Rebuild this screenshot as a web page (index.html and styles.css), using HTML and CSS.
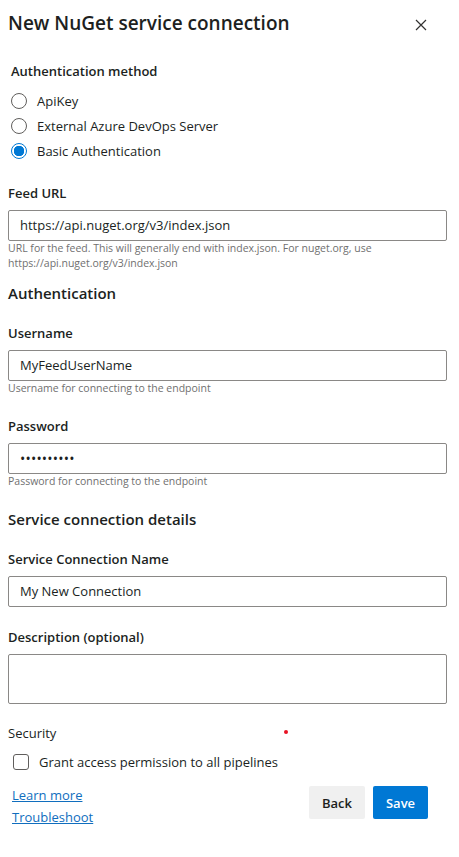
FILE: index.html
```html
<!DOCTYPE html>
<html lang="en">
<head>
  <meta charset="UTF-8" />
  <meta name="viewport" content="width=device-width, initial-scale=1.0" />
  <title>New NuGet service connection</title>
  <link rel="stylesheet" href="styles.css">
</head>
<body>

<div class="panel">
  <div class="panel-header">
    <h1>New NuGet service connection</h1>
    <button class="close" aria-label="Close">
      <svg width="12" height="12" viewBox="0 0 12 12"><path d="M1 1 L11 11 M11 1 L1 11" stroke="#323130" stroke-width="1.2" fill="none"/></svg>
    </button>
  </div>

  <div class="auth-method">
    <div class="field-label">Authentication method</div>
    <div class="radios">
      <label class="radio"><span class="circle"></span>ApiKey</label>
      <label class="radio"><span class="circle"></span>External Azure DevOps Server</label>
      <label class="radio"><span class="circle checked"></span>Basic Authentication</label>
    </div>
  </div>

  <div class="field-label first">Feed URL</div>
  <div class="textbox">https://api.nuget.org/v3/index.json</div>
  <div class="help">URL for the feed. This will generally end with index.json. For nuget.org, use https://api.nuget.org/v3/index.json</div>

  <h2>Authentication</h2>

  <div class="field-label">Username</div>
  <div class="textbox">MyFeedUserName</div>
  <div class="help">Username for connecting to the endpoint</div>

  <div class="field-label">Password</div>
  <div class="textbox dots">••••••••••</div>
  <div class="help">Password for connecting to the endpoint</div>

  <h2 class="spaced">Service connection details</h2>

  <div class="field-label">Service Connection Name</div>
  <div class="textbox">My New Connection</div>

  <div class="field-label">Description (optional)</div>
  <div class="textbox area"></div>

  <div class="security"><span class="security-text">Security</span><span class="req-dot"></span></div>
  <label class="check"><span class="box"></span>Grant access permission to all pipelines</label>

  <div class="footer">
    <div class="links">
      <a href="#">Learn more</a>
      <a href="#">Troubleshoot</a>
    </div>
    <div class="buttons">
      <button class="btn">Back</button>
      <button class="btn primary">Save</button>
    </div>
  </div>
</div>

</body>
</html>
```

FILE: styles.css
```css
body { margin: 0; background: #fff; font-family: "Open Sans", "Noto Sans", Arial, sans-serif; color: #201f1e; font-size: 13px; }
.panel { width: 439px; padding: 8px 0 0 8px; }
.panel-header { display: flex; align-items: center; height: 28px; margin-top: 1px; }
h1 { margin: 0; font-size: 19px; font-weight: 600; line-height: 28px; flex: 1; }
.close { border: 0; background: none; padding: 0; width: 12px; height: 12px; margin: 3px 20px 0 0; display: flex; }
.auth-method { padding-left: 3px; margin-top: 24px; }
.field-label { font-weight: 600; font-size: 13px; line-height: 20px; margin-top: 20px; }
.auth-method .field-label { margin-top: 0; }
.radios { margin-top: 7px; }
.radio { display: flex; align-items: center; height: 25px; }
.circle { width: 16px; height: 16px; box-sizing: border-box; border: 1px solid #605e5c; border-radius: 50%; margin-right: 10px; }
.circle.checked { border-color: #0078d4; background: radial-gradient(circle, #0078d4 0 5px, #fff 5.5px); }
.textbox { box-sizing: border-box; height: 31px; margin-top: 7px; border: 1px solid #8a8886; border-radius: 2px; padding: 0 11px; line-height: 29px; font-size: 13px; }
.textbox.dots { font-size: 14px; letter-spacing: 0.2px; }
.textbox.area { height: 50px; margin-top: 7px; }
.help { font-size: 10.5px; line-height: 15px; color: #707070; padding-right: 40px; }
h2 { margin: 11px 0 0; font-size: 15px; font-weight: 600; line-height: 22px; }
h2.spaced { margin-top: 19px; }
h2 + .field-label { margin-top: 19px; }
.security { display: flex; align-items: center; line-height: 20px; margin-top: 19px; }
.security-text { width: 276px; }
.req-dot { width: 4px; height: 4px; border-radius: 50%; background: #e81123; margin-bottom: 2px; }
.check { display: flex; align-items: center; height: 24px; margin-top: 7px; padding-left: 5px; }
.box { width: 16px; height: 16px; box-sizing: border-box; border: 1px solid #605e5c; border-radius: 3px; margin-right: 10px; }
.footer { display: flex; justify-content: space-between; align-items: flex-start; margin-top: 10px; padding: 0 19px 0 4px; }
.links { display: flex; flex-direction: column; }
.links a { color: #106ebe; line-height: 22px; }
.buttons { display: flex; gap: 8px; margin-top: 2px; }
.btn { height: 33px; min-width: 56px; border: 0; border-radius: 2px; background: #f0f0f0; font-family: inherit; font-size: 13px; font-weight: 600; color: #201f1e; padding: 0 12px; }
.btn.primary { background: #0078d4; color: #fff; min-width: 55px; }
```
